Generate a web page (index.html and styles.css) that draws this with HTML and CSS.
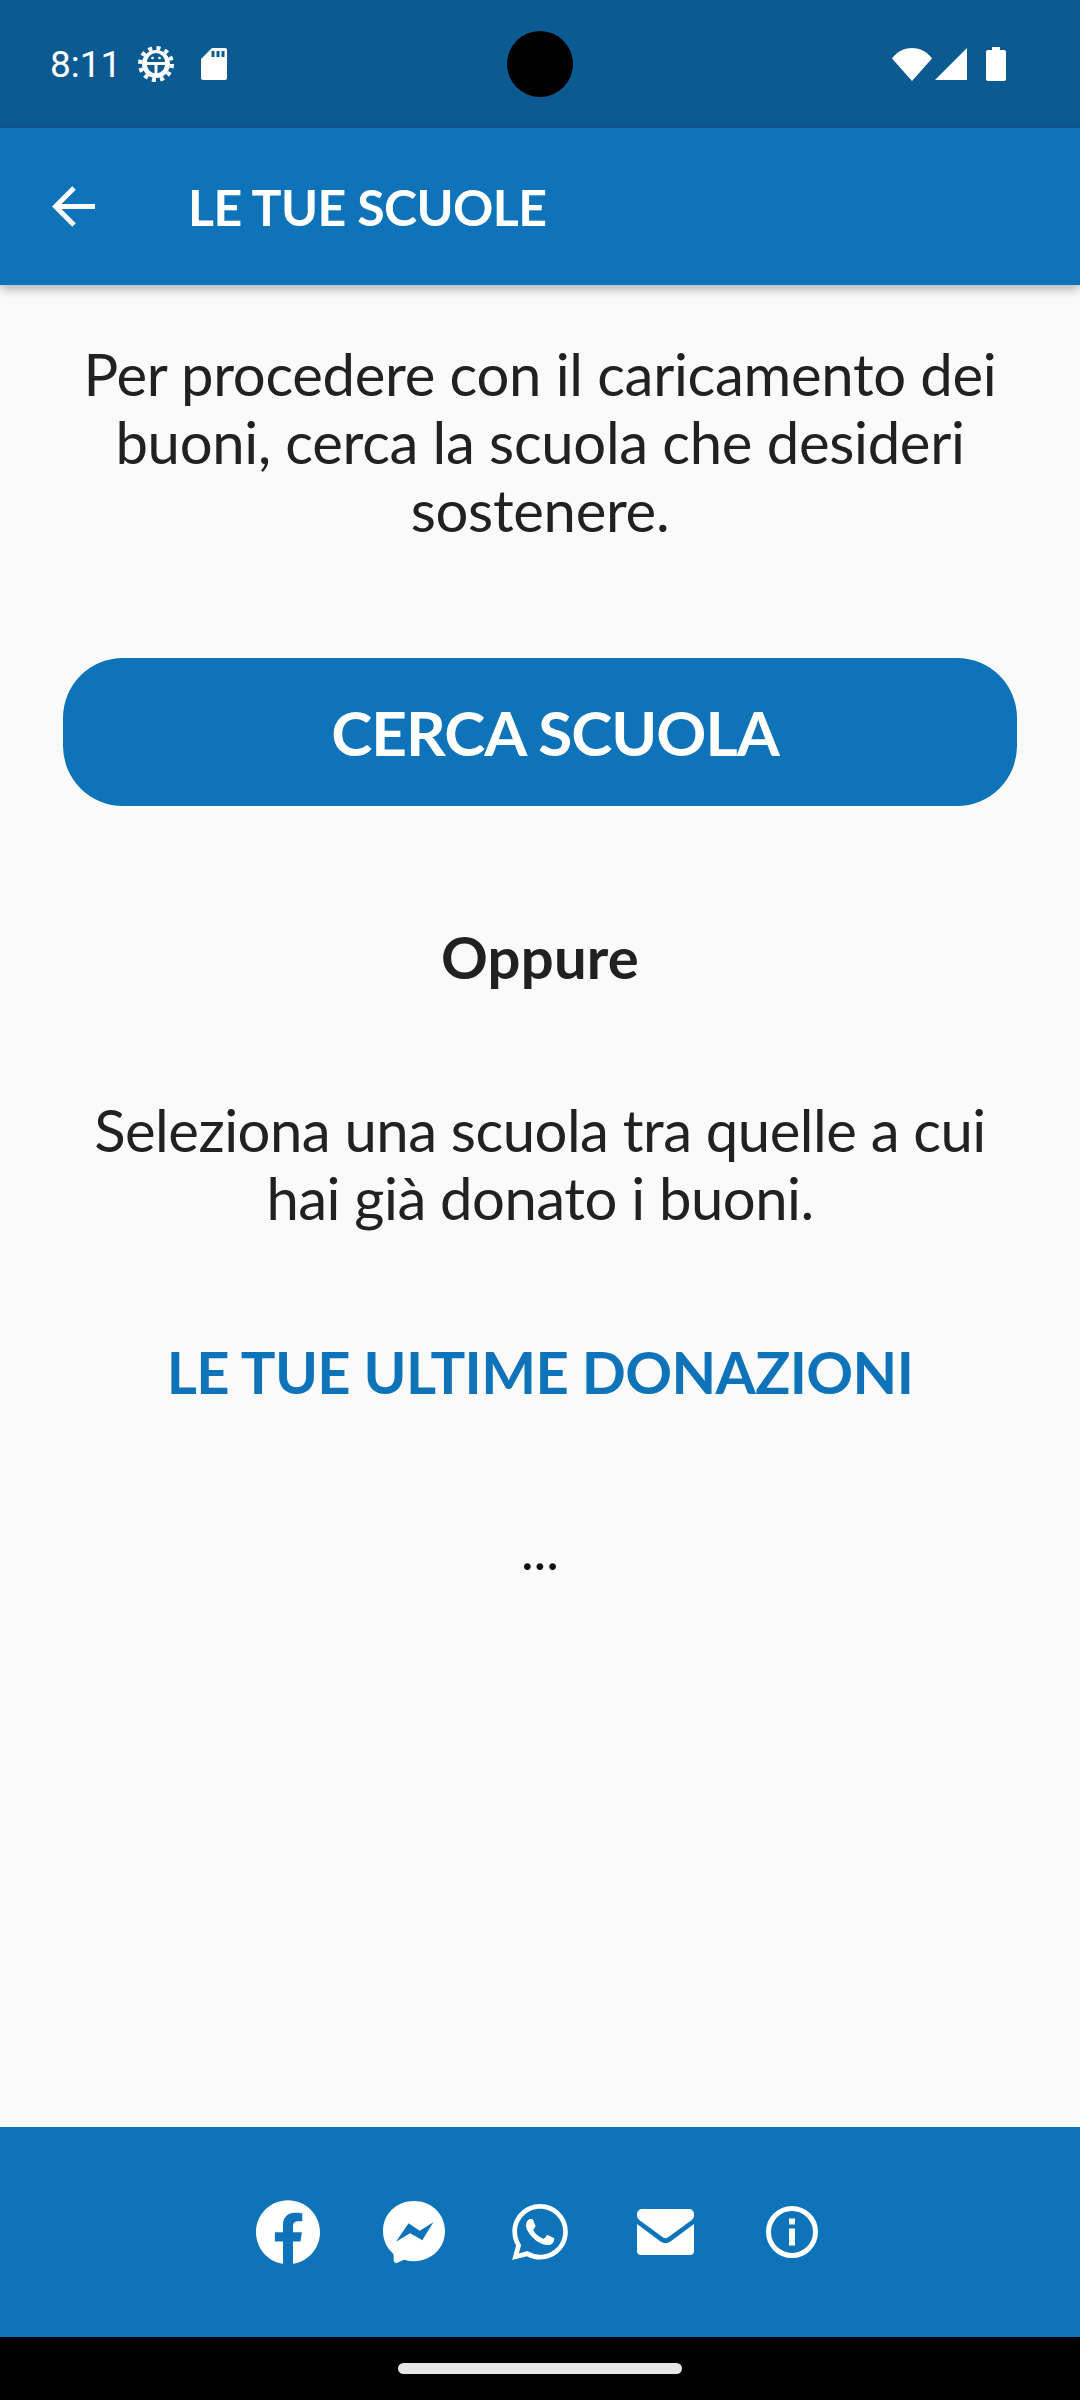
FILE: index.html
```html
<!DOCTYPE html>
<html lang="it">
<head>
    <meta charset="UTF-8">
    <meta name="viewport" content="width=device-width, initial-scale=1.0">
    <title>Le tue scuole</title>
    <link rel="stylesheet" href="styles.css">
</head>
<body>
    <div class="screen">
        <div class="status-bar">
            <div class="status-left">
                <span class="time">8:11</span>
                <svg class="icon-debug" viewBox="0 0 36 36">
                    <circle cx="18" cy="18" r="14" fill="#fff"/>
                    <circle cx="18" cy="18" r="16" fill="none" stroke="#fff" stroke-width="4" stroke-dasharray="4 4.38"/>
                    <path d="M9 16a9 9 0 0 1 18 0z" fill="#0c5a92"/>
                    <path d="M9 19h7.500v8.200A9 9 0 0 1 9 19zM19.500 19H27a9 9 0 0 1-7.500 8.200z" fill="#0c5a92"/>
                    <circle cx="14.500" cy="12" r="1.300" fill="#fff"/>
                    <circle cx="21.500" cy="12" r="1.300" fill="#fff"/>
                </svg>
                <svg class="icon-sd" viewBox="0 0 26 32">
                    <path d="M11 0h13a2 2 0 0 1 2 2v28a2 2 0 0 1-2 2H2a2 2 0 0 1-2-2V11z" fill="#fff"/>
                    <path d="M10.500 3h3v6h-3zM15.500 3h3v6h-3zM20.500 3h3v6h-3z" fill="#0c5a92"/>
                </svg>
            </div>
            <div class="camera"></div>
            <div class="status-right">
                <svg class="icon-wifi" viewBox="0 0 40 33">
                    <path d="M0 10.500C5 3.500 12 0 20 0s15 3.500 20 10.500L20 33z" fill="#fff"/>
                </svg>
                <svg class="icon-signal" viewBox="0 0 32 32">
                    <path d="M32 0v32H0z" fill="#fff"/>
                </svg>
                <svg class="icon-battery" viewBox="0 0 20 34">
                    <path d="M6 0h8v3h4a2 2 0 0 1 2 2v27a2 2 0 0 1-2 2H2a2 2 0 0 1-2-2V5a2 2 0 0 1 2-2h4z" fill="#fff"/>
                </svg>
            </div>
        </div>

        <header class="app-bar">
            <svg class="icon-back" viewBox="0 0 43 41">
                <path d="M43 20.500H4M22 2L3.500 20.500 22 39" fill="none" stroke="#fff" stroke-width="5"/>
            </svg>
            <h1 class="app-title">LE TUE SCUOLE</h1>
        </header>

        <main class="content">
            <p class="intro">Per procedere con il caricamento dei buoni, cerca la scuola che desideri sostenere.</p>
            <button class="btn-search" type="button">CERCA SCUOLA</button>
            <h2 class="or-title">Oppure</h2>
            <p class="select-text">Seleziona una scuola tra quelle a cui<br>hai già donato i buoni.</p>
            <h3 class="donations-title">LE TUE ULTIME DONAZIONI</h3>
            <div class="loading">...</div>
        </main>

        <footer class="footer">
            <svg class="icon-fb" viewBox="0 0 24 24">
                <path fill="#fff" d="M24 12.073c0-6.627-5.373-12-12-12s-12 5.373-12 12c0 5.990 4.388 10.954 10.125 11.854v-8.385H7.078v-3.470h3.047V9.430c0-3.007 1.792-4.669 4.533-4.669 1.312 0 2.686.235 2.686.235v2.953H15.830c-1.491 0-1.956.925-1.956 1.874v2.250h3.328l-.532 3.470h-2.796v8.385C19.612 23.027 24 18.062 24 12.073z"/>
            </svg>
            <svg class="icon-messenger" viewBox="0 0 24 24">
                <path fill="#fff" fill-rule="evenodd" d="M12 0C5.240 0 0 4.952 0 11.640c0 3.499 1.434 6.521 3.769 8.610a.96.96 0 0 1 .323.683l.065 2.135a.96.96 0 0 0 1.347.849l2.381-1.051a.96.96 0 0 1 .641-.048c1.094.3 2.259.462 3.474.462 6.760 0 12-4.952 12-11.640S18.760 0 12 0zM5 15.800L9.900 8.600l4.300 2.900 5.300-3.300-4.300 7-4.700-2.700z"/>
            </svg>
            <svg class="icon-whatsapp" viewBox="0 0 24 24">
                <path fill="#fff" d="M17.472 14.382c-.297-.149-1.758-.867-2.030-.967-.273-.099-.471-.148-.670.150-.197.297-.767.966-.940 1.164-.173.199-.347.223-.644.075-.297-.150-1.255-.463-2.390-1.475-.883-.788-1.480-1.761-1.653-2.059-.173-.297-.018-.458.130-.606.134-.133.298-.347.446-.520.149-.174.198-.298.298-.497.099-.198.050-.371-.025-.520-.075-.149-.669-1.612-.916-2.207-.242-.579-.487-.500-.669-.510-.173-.008-.371-.010-.570-.010-.198 0-.520.074-.792.372-.272.297-1.040 1.016-1.040 2.479 0 1.462 1.065 2.875 1.213 3.074.149.198 2.096 3.200 5.077 4.487.709.306 1.262.489 1.694.625.712.227 1.360.195 1.871.118.571-.085 1.758-.719 2.006-1.413.248-.694.248-1.289.173-1.413-.074-.124-.272-.198-.570-.347m-5.421 7.403h-.004a9.870 9.870 0 0 1-5.031-1.378l-.361-.214-3.741.982.998-3.648-.235-.374a9.860 9.860 0 0 1-1.510-5.260c.001-5.450 4.436-9.884 9.888-9.884 2.640 0 5.122 1.030 6.988 2.898a9.825 9.825 0 0 1 2.893 6.994c-.003 5.450-4.437 9.884-9.885 9.884m8.413-18.297A11.815 11.815 0 0 0 12.050 0C5.495 0 .160 5.335.157 11.892c0 2.096.547 4.142 1.588 5.945L.057 24l6.305-1.654a11.882 11.882 0 0 0 5.683 1.448h.005c6.554 0 11.890-5.335 11.893-11.893a11.821 11.821 0 0 0-3.480-8.413z"/>
            </svg>
            <svg class="icon-mail" viewBox="0 0 57 46">
                <path fill="#fff" d="M5 0h47a5 5 0 0 1 5 5v1.500c0 2-1 3.600-2.600 4.800L31.500 28a5 5 0 0 1-6 0L2.600 11.300C1 10.100 0 8.500 0 6.500V5a5 5 0 0 1 5-5z"/>
                <path fill="#fff" d="M0 15l23.500 17.500a8.500 8.500 0 0 0 10 0L57 15v27a4 4 0 0 1-4 4H4a4 4 0 0 1-4-4z"/>
            </svg>
            <svg class="icon-info" viewBox="0 0 52 52">
                <circle cx="26" cy="26" r="23.500" fill="none" stroke="#fff" stroke-width="5"/>
                <path fill="#fff" d="M23 12.500h6v6h-6zM23 22.500h6v17h-6z"/>
            </svg>
        </footer>

        <div class="nav-bar">
            <div class="nav-pill"></div>
        </div>
    </div>
</body>
</html>
```

FILE: styles.css
```css
* {
    box-sizing: border-box;
}
body {
    margin: 0;
    font-family: "Lato", sans-serif;
    background-color: #fafafa;
}
svg {
    display: block;
    flex: none;
}
.screen {
    display: flex;
    flex-direction: column;
    width: 1080px;
    height: 2400px;
    overflow: hidden;
}
.status-bar {
    position: relative;
    display: flex;
    justify-content: space-between;
    align-items: center;
    height: 128px;
    padding: 0 74px 0 50px;
    background-color: #0c5a92;
}
.status-left,
.status-right {
    display: flex;
    align-items: center;
}
.time {
    width: 88px;
    font-family: "Roboto", sans-serif;
    font-size: 37px;
    color: #fff;
}
.icon-debug {
    width: 36px;
    height: 36px;
    margin-right: 27px;
}
.icon-sd {
    width: 26px;
    height: 32px;
}
.camera {
    position: absolute;
    left: 507px;
    top: 31px;
    width: 66px;
    height: 66px;
    border-radius: 50%;
    background-color: #000;
}
.icon-wifi {
    width: 40px;
    height: 33px;
}
.icon-signal {
    width: 32px;
    height: 32px;
    margin-left: 3px;
}
.icon-battery {
    width: 20px;
    height: 34px;
    margin-left: 19px;
}
.app-bar {
    position: relative;
    display: flex;
    align-items: center;
    height: 157px;
    padding-left: 52px;
    background-color: #0f73ba;
    box-shadow: 0 4px 10px rgba(0, 0, 0, 0.3);
}
.icon-back {
    width: 43px;
    height: 41px;
}
.app-title {
    margin: 0 0 0 93px;
    font-size: 50px;
    font-weight: 700;
    letter-spacing: -0.6px;
    color: #fff;
}
.content {
    flex: 1;
    display: flex;
    flex-direction: column;
    align-items: center;
    padding: 55px 63px 0;
    text-align: center;
    color: #212121;
}
.intro,
.select-text {
    margin: 0;
    font-size: 58px;
    line-height: 68px;
    letter-spacing: -0.3px;
}
.btn-search {
    flex: none;
    width: 954px;
    height: 148px;
    margin-top: 114px;
    padding: 0 0 0 30px;
    border: none;
    border-radius: 60px;
    font-family: inherit;
    font-size: 62px;
    font-weight: 700;
    letter-spacing: -1px;
    color: #fff;
    background-color: #0f73ba;
}
.or-title {
    margin: 117px 0 0;
    font-size: 58px;
    font-weight: 700;
    line-height: 68px;
    letter-spacing: 0.2px;
}
.select-text {
    margin-top: 105px;
    letter-spacing: -0.5px;
}
.donations-title {
    margin: 106px 0 0;
    font-size: 58px;
    font-weight: 700;
    line-height: 68px;
    letter-spacing: -0.6px;
    color: #0f73ba;
}
.loading {
    margin-top: 116px;
    font-size: 54px;
    line-height: 56px;
    color: #111;
}
.footer {
    display: flex;
    justify-content: center;
    align-items: center;
    height: 210px;
    padding-right: 6px;
    background-color: #0f73ba;
}
.icon-fb {
    width: 64px;
    height: 64px;
    margin-right: 63px;
}
.icon-messenger {
    width: 62px;
    height: 62px;
    margin-right: 67px;
}
.icon-whatsapp {
    width: 56px;
    height: 56px;
    margin-right: 69px;
}
.icon-mail {
    width: 57px;
    height: 46px;
    margin-right: 72px;
}
.icon-info {
    width: 52px;
    height: 52px;
}
.nav-bar {
    display: flex;
    justify-content: center;
    height: 63px;
    padding-top: 26px;
    background-color: #000;
}
.nav-pill {
    width: 284px;
    height: 11px;
    border-radius: 6px;
    background-color: #e6e6e6;
}
```
